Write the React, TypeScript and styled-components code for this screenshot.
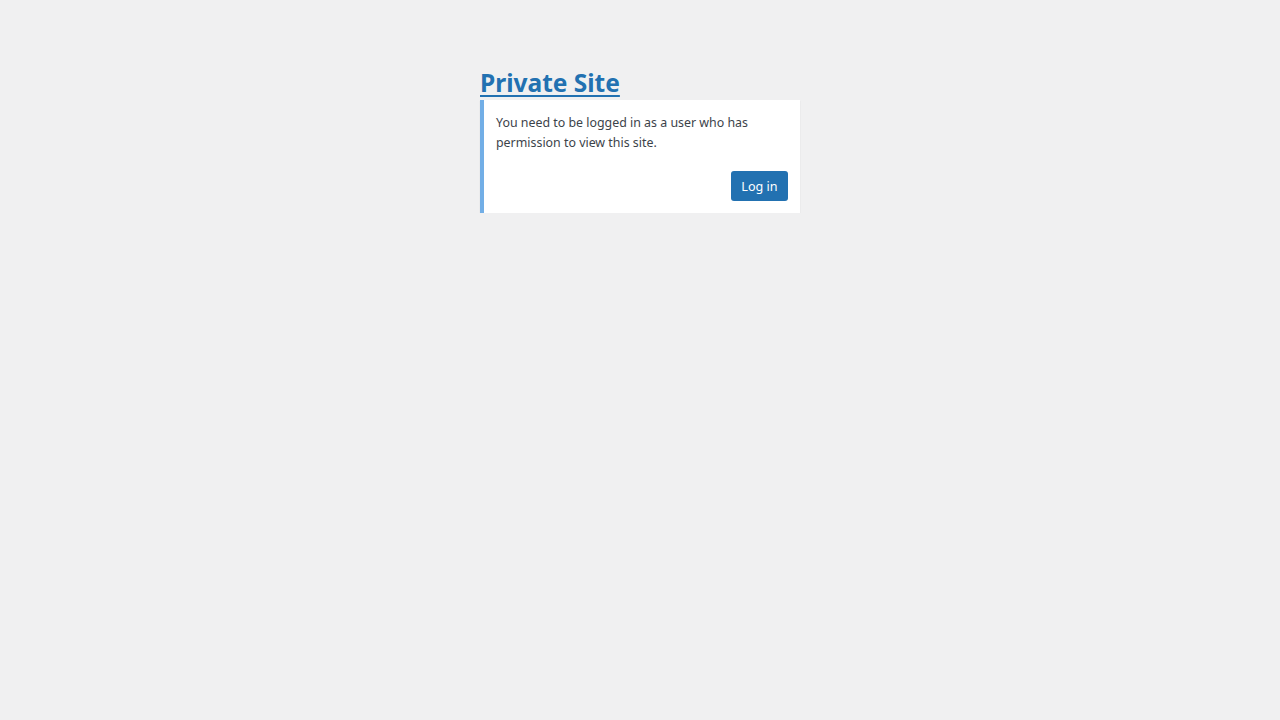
import React from 'react';
import styled, { createGlobalStyle } from 'styled-components';

const GlobalStyle = createGlobalStyle`
  html, body {
    margin: 0;
    padding: 0;
    background: #f0f0f1;
  }
  body {
    font-family: "Noto Sans", "Open Sans", sans-serif;
    color: #3c434a;
  }
`;

const Wrapp = styled.div`
  width: 320px;
  margin: 0 auto;
  padding-top: 66px;
`;

const Title = styled.h1`
  margin: 0;
  font-size: 24.5px;
  line-height: 34px;
  font-weight: 700;

  a {
    color: #2271b1;
    text-decoration: underline;
    text-underline-offset: 3px;
    text-decoration-thickness: 2px;
  }
`;

const Notice = styled.div`
  background: #fff;
  border-left: 4px solid #72aee6;
  box-shadow: 0 1px 1px rgba(0, 0, 0, 0.12);
  padding: 13px 12px 12px;
`;

const Message = styled.p`
  margin: 0;
  font-size: 12.4px;
  line-height: 20px;
  color: #3c434a;
`;

const Actions = styled.div`
  display: flex;
  justify-content: flex-end;
  margin-top: 18px;
`;

const Button = styled.a`
  display: inline-flex;
  align-items: center;
  justify-content: center;
  width: 57px;
  height: 30px;
  box-sizing: border-box;
  border-radius: 3px;
  background: #2271b1;
  color: #fff;
  font-size: 12.6px;
  text-decoration: none;
  cursor: pointer;
`;

export default function App() {
  return (
    <>
      <GlobalStyle />
      <Wrapp>
        <Title>
          <a href="#">Private Site</a>
        </Title>
        <Notice>
          <Message>
            You need to be logged in as a user who has permission to view this site.
          </Message>
          <Actions>
            <Button href="#">Log in</Button>
          </Actions>
        </Notice>
      </Wrapp>
    </>
  );
}
